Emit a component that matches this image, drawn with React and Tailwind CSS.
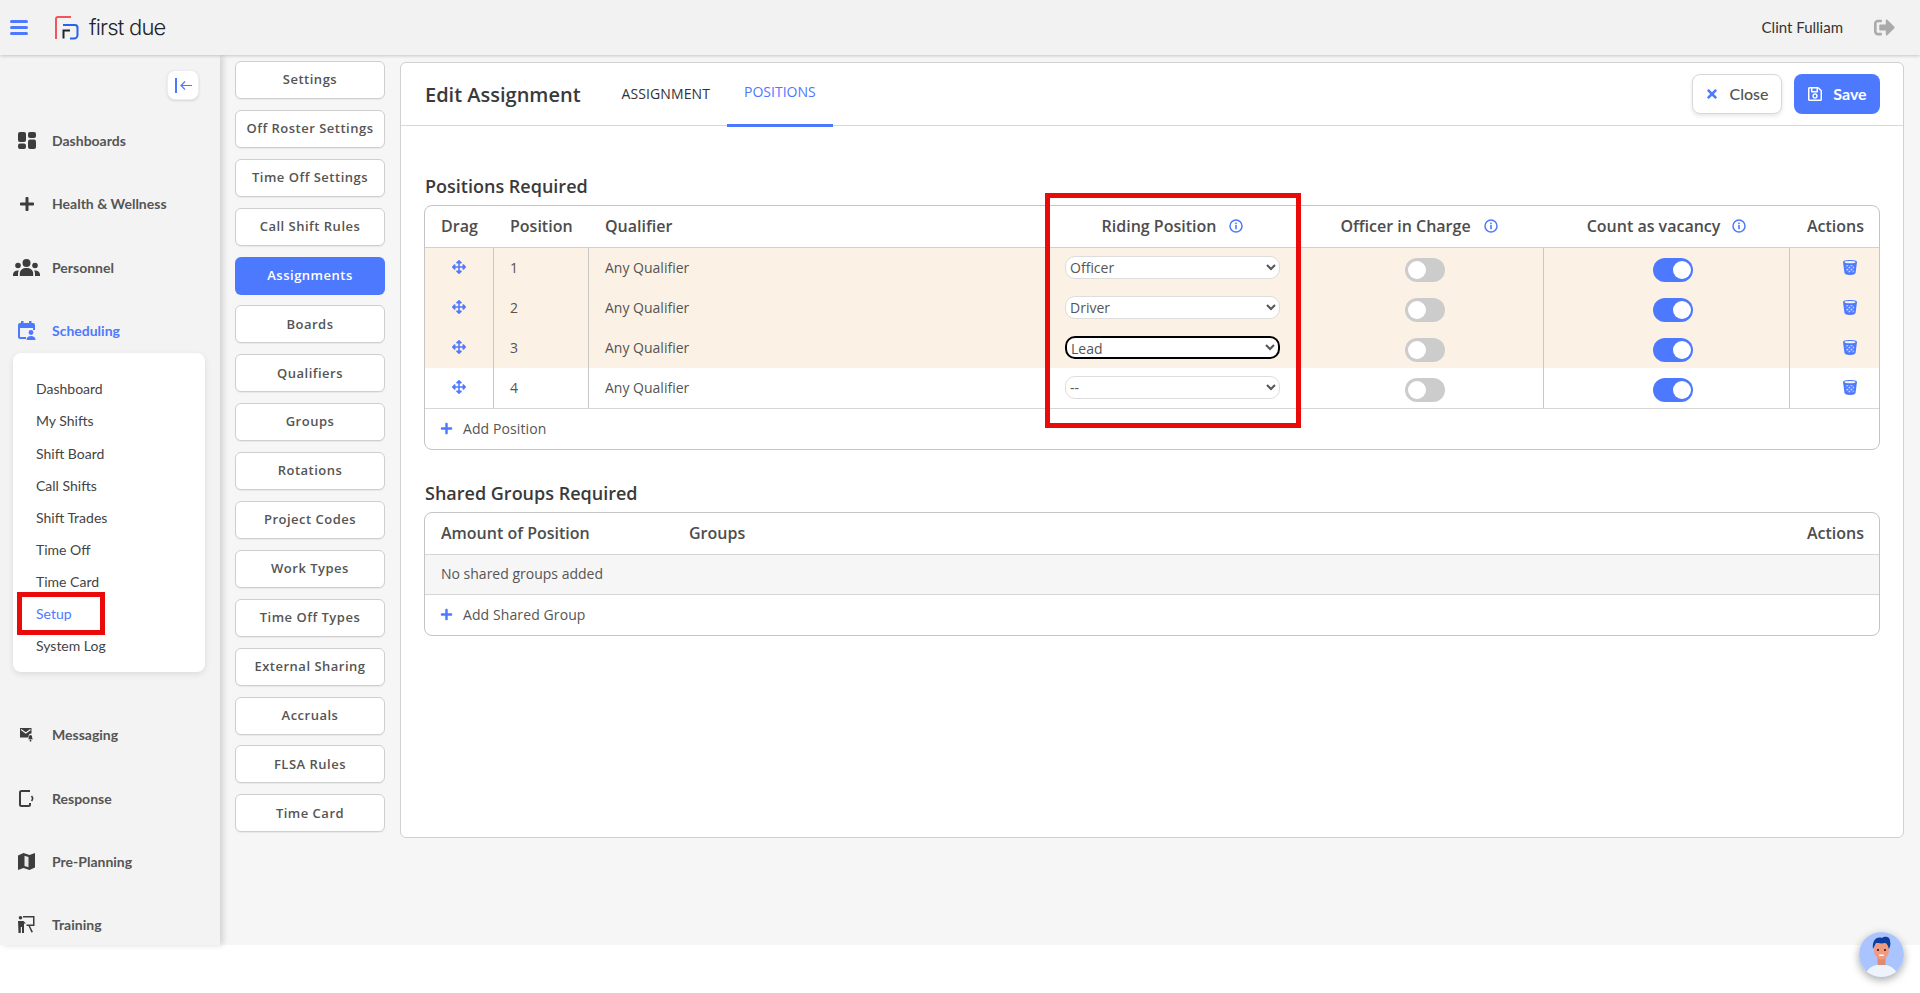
import { FaArrowsAlt, FaPlus, FaRegSave, FaSignOutAlt, FaTimes } from 'react-icons/fa'

const setupTabs = [
  'Settings', 'Off Roster Settings', 'Time Off Settings', 'Call Shift Rules', 'Assignments', 'Boards',
  'Qualifiers', 'Groups', 'Rotations', 'Project Codes', 'Work Types', 'Time Off Types',
  'External Sharing', 'Accruals', 'FLSA Rules', 'Time Card',
]
const subMenu = ['Dashboard', 'My Shifts', 'Shift Board', 'Call Shifts', 'Shift Trades', 'Time Off', 'Time Card', 'Setup', 'System Log']
const rows = [
  { n: 1, value: 'Officer', shaded: true },
  { n: 2, value: 'Driver', shaded: true },
  { n: 3, value: 'Lead', shaded: true, focused: true },
  { n: 4, value: '--', shaded: false },
]

function DashIcon() {
  return (
    <svg width="18" height="17" viewBox="0 0 18 17" fill="#3d3d3d">
      <rect x="0" y="0" width="8" height="10" rx="2" />
      <rect x="10" y="0" width="8" height="6" rx="2" />
      <rect x="0" y="11.500" width="8" height="5.500" rx="2" />
      <rect x="10" y="7.500" width="8" height="9.500" rx="2" />
    </svg>
  )
}

function GroupIcon() {
  return (
    <svg width="27" height="17" viewBox="0 0 27 17" fill="#3d3d3d">
      <circle cx="13.500" cy="4" r="4" />
      <path d="M6.800 17v-2.500c0-3.500 3-5.500 6.700-5.500s6.700 2 6.700 5.500V17z" />
      <circle cx="5" cy="6.500" r="2.800" />
      <circle cx="22" cy="6.500" r="2.800" />
      <path d="M0 17v-1.500c0-2.300 1.800-4 4.800-4 .5 0 .8 0 1.100.1-.6.900-.9 1.900-.9 3V17z" />
      <path d="M27 17v-1.500c0-2.300-1.800-4-4.800-4-.5 0-.8 0-1.100.1.600.9.900 1.900.9 3V17z" />
    </svg>
  )
}

function CalendarIcon() {
  return (
    <svg width="18" height="19" viewBox="0 0 18 19" fill="#4d79ff">
      <rect x="3" y="0" width="2.500" height="3" />
      <rect x="11" y="0" width="2.500" height="3" />
      <path d="M2 2h13a2 2 0 0 1 2 2v5h-2V7H2v9h6v2H2a2 2 0 0 1-2-2V4a2 2 0 0 1 2-2z" />
      <circle cx="13" cy="11.500" r="2.400" />
      <path d="M8.500 19c0-3 2-4 4.500-4s4.500 1 4.500 4z" />
    </svg>
  )
}

function MessageIcon() {
  return (
    <svg width="13" height="14" viewBox="0 0 13 14" fill="#3d3d3d">
      <path d="M0 0H11.500V5.500A3 3 0 0 0 8.500 8.500V9.500H0z" />
      <path d="M1 1.500 5.800 5 10.500 1.500" fill="none" stroke="#f3f3f3" strokeWidth="1.100" />
      <path d="M10.500 7a1.600 1.600 0 0 1 1.600 1.600V10l.9 1.200H8l.9-1.200V8.600A1.600 1.600 0 0 1 10.500 7zM9.700 11.800h1.600V13.500H9.700z" />
    </svg>
  )
}

function ResponseIcon() {
  return (
    <svg width="15" height="17" viewBox="0 0 15 17" fill="none" stroke="#3d3d3d">
      <path d="M11 1H2.500A1.500 1.500 0 0 0 1 2.500v12A1.500 1.500 0 0 0 2.500 16H9.500A1.500 1.500 0 0 0 11 14.500V13" strokeWidth="2" />
      <path d="M12.500 6a3.800 3.800 0 0 1 0 5" strokeWidth="1.600" />
    </svg>
  )
}

function MapIcon() {
  return (
    <svg width="17" height="17" viewBox="0 0 17 17">
      <path d="M0 2.500 5.500 0l6 2L17 0v14.500L11.500 17l-6-2L0 17z" fill="#3d3d3d" />
      <path d="M6.500 2.800 10.500 4v10.300l-4-1.300z" fill="#e8e8e8" />
    </svg>
  )
}

function TrainingIcon() {
  return (
    <svg width="17" height="17" viewBox="0 0 17 17" fill="#3d3d3d">
      <circle cx="2.500" cy="1.800" r="1.800" />
      <path d="M0 5h5.500L8 7.500H6V17H4v-6H2.800v6H0.500z" />
      <path d="M5 0h11.500v10H12l3 6-1.600.6L10.500 10H8.500V8.500h6.500v-7H5z" />
    </svg>
  )
}

function InfoIcon() {
  return (
    <svg width="14" height="14" viewBox="0 0 14 14" fill="none" className="shrink-0">
      <circle cx="7" cy="7" r="6" stroke="#4d79ff" strokeWidth="1.500" />
      <rect x="6.200" y="6" width="1.600" height="4.200" fill="#4d79ff" />
      <rect x="6.200" y="3.600" width="1.600" height="1.600" fill="#4d79ff" />
    </svg>
  )
}

function TrashIcon() {
  return (
    <svg width="14" height="15" viewBox="0 0 14 15">
      <defs>
        <pattern id="mesh" width="3" height="3" patternUnits="userSpaceOnUse" patternTransform="rotate(45)">
          <rect width="3" height="3" fill="#4d79ff" />
          <rect width="1.600" height="1.600" fill="#dfe7ff" />
        </pattern>
      </defs>
      <path d="M0 2C0 .8 3 0 7 0s7 .8 7 2l-1.500 11c-.2 1.200-2.500 2-5.500 2s-5.300-.8-5.500-2z" fill="#4d79ff" />
      <ellipse cx="7" cy="2.200" rx="5.400" ry="1.100" fill="#f2f4ff" />
      <path d="M2.500 5h9l-.8 7.500H3.300z" fill="url(#mesh)" />
    </svg>
  )
}

function Logo() {
  return (
    <svg width="24" height="24" viewBox="0 0 24 24" fill="none">
      <path d="M1 23V3a2 2 0 0 1 2-2h13" stroke="#f2545b" strokeWidth="2" />
      <path d="M8 9h12a2.500 2.500 0 0 1 2.500 2.500V19a3.500 3.500 0 0 1-3.500 3.500h-4" stroke="#2563eb" strokeWidth="2" />
      <path d="M8.500 22.500V14.500H15" stroke="#20242c" strokeWidth="2" />
    </svg>
  )
}

function Avatar() {
  return (
    <svg width="45" height="45" viewBox="0 0 45 45">
      <clipPath id="avatar-clip"><circle cx="22.500" cy="22.500" r="22.500" /></clipPath>
      <g clipPath="url(#avatar-clip)">
        <rect width="45" height="45" fill="#a9c4ff" />
        <path d="M6 45c1-9 8-12 16.500-13 8 1 15 4 16.500 13z" fill="#eef3fb" />
        <rect x="18.500" y="24" width="8" height="9" fill="#e08a70" />
        <ellipse cx="22.500" cy="18" rx="7.500" ry="9.500" fill="#f09a80" />
        <path d="M14 17c-1-8 3-13 9-11 2-2 8-2 8 3 1 3 0 6-1 8-1-3-2-6-4-6-4 1-7 0-9 0-1 2-2 4-3 6z" fill="#0f3d9e" />
        <rect x="18" y="17" width="2" height="2" fill="#5a2f22" />
        <rect x="25" y="17" width="2" height="2" fill="#5a2f22" />
        <rect x="20" y="22.500" width="5" height="1.500" rx="0.700" fill="#fff" />
      </g>
    </svg>
  )
}

function Toggle({ on }) {
  return (
    <div className={`ml-[12px] mt-[5px] h-[24px] w-[40px] rounded-full flex items-center ${on ? 'bg-[#4d79ff] justify-end pr-[1.500px]' : 'bg-[#cccccc] justify-start pl-[3px]'}`}>
      <div className="h-[18px] w-[18px] rounded-full bg-white" />
    </div>
  )
}

function NavItem({ icon, label, active, className = '' }) {
  return (
    <div className={`flex items-center h-[63.300px] pl-[12px] ${className}`}>
      <div className="w-[29px] flex justify-center shrink-0">{icon}</div>
      <span className={`ml-[11px] text-[14px] font-bold ${active ? 'text-[#4d79ff]' : 'text-[#555555]'}`}>{label}</span>
    </div>
  )
}

function AddRow({ label }) {
  return (
    <div className="h-[40px] flex items-center pl-[15px] pb-[2px] text-[14px] font-medium tracking-[0.1px] text-[#555555]">
      <FaPlus size={13} color="#4d79ff" />
      <span className="ml-[10px]">{label}</span>
    </div>
  )
}

export default function App() {
  return (
    <div className="relative h-[993px] w-[1920px] overflow-hidden bg-white font-['Open_Sans',sans-serif]">
      <header className="relative z-20 h-[55px] flex items-center bg-[#f2f2f2] shadow-[0_1px_3px_rgba(0,0,0,0.2)]">
        <div className="ml-[10px] flex flex-col gap-[3px] w-[18px]">
          <div className="h-[3px] bg-[#4d79ff] rounded-sm" />
          <div className="h-[3px] bg-[#4d79ff] rounded-sm" />
          <div className="h-[3px] bg-[#4d79ff] rounded-sm" />
        </div>
        <div className="ml-[27px]"><Logo /></div>
        <span className="ml-[10px] font-['Inter',sans-serif] font-light text-[22px] tracking-[-0.800px] text-[#20242c]">first due</span>
        <span className="ml-auto font-['Lato',sans-serif] text-[15px] text-[#333333]">Clint Fulliam</span>
        <FaSignOutAlt size={21} color="#aaaaaa" className="ml-[31px] mr-[25px]" />
      </header>

      <div className="h-[890px] flex bg-[#f6f6f6]">
        <aside className="relative z-10 w-[220px] shrink-0 bg-[#f3f3f3] shadow-[3px_0_6px_rgba(0,0,0,0.15)] font-['Lato',sans-serif]">
          <div className="h-[54px] flex justify-end pt-[15px] pr-[21px]">
            <div className="h-[30px] w-[32px] rounded-lg bg-white border border-[#eeeeee] flex items-center justify-center shadow-sm">
              <svg width="17" height="15" viewBox="0 0 17 15" fill="none">
                <rect x="0" y="0" width="2" height="15" fill="#4d79ff" />
                <path d="M17 7.500H6M10 3.500l-4 4 4 4" stroke="#4d79ff" strokeWidth="1.200" />
              </svg>
            </div>
          </div>
          <NavItem icon={<DashIcon />} label="Dashboards" />
          <NavItem icon={<FaPlus size={16} color="#3d3d3d" />} label="Health & Wellness" />
          <NavItem icon={<GroupIcon />} label="Personnel" />
          <NavItem icon={<CalendarIcon />} label="Scheduling" active className="mb-[-9.500px]" />
          <div className="mx-[13px] w-[192px] h-[319px] rounded-lg bg-white pt-[20px] shadow-[0_2px_6px_rgba(0,0,0,0.1)]">
            {subMenu.map(item => (
              <div key={item} className={`h-[32.150px] flex items-center pl-[23px] text-[14px] ${item === 'Setup' ? 'text-[#4d79ff]' : 'text-[#444444]'}`}>
                {item}
              </div>
            ))}
          </div>
          <div className="mt-[31.500px]">
            <NavItem icon={<MessageIcon />} label="Messaging" />
            <NavItem icon={<ResponseIcon />} label="Response" />
            <NavItem icon={<MapIcon />} label="Pre-Planning" />
            <NavItem icon={<TrainingIcon />} label="Training" />
          </div>
        </aside>

        <nav className="ml-[15px] w-[150px] shrink-0 pt-[6px] flex flex-col gap-[10.900px]">
          {setupTabs.map(tab => (
            <div
              key={tab}
              className={`h-[38px] rounded-md flex items-center justify-center text-[13px] font-semibold tracking-[0.500px] ${
                tab === 'Assignments'
                  ? 'bg-[#4d79ff] text-white font-bold'
                  : 'bg-white text-[#555555] border border-[#cfcfcf] shadow-[0_1px_1px_rgba(0,0,0,0.06)]'
              }`}
            >
              {tab}
            </div>
          ))}
        </nav>

        <main className="ml-[15px] mt-[6.500px] w-[1504px] h-[776px] rounded-md bg-white border border-[#d0d0d0]">
          <div className="h-[63.500px] flex border-b border-[#d8d8d8] pl-[24px] pr-[23px]">
            <h1 className="self-center text-[20px] font-semibold text-[#3a3a3a] mt-[2px]">Edit Assignment</h1>
            <div className="ml-[24px] h-[63px] px-[17px] flex items-center pb-[2px] text-[14px] font-medium tracking-[0.100px] text-[#333333]">ASSIGNMENT</div>
            <div className="h-[64px] px-[17px] flex items-center pb-[3px] text-[14px] font-medium text-[#4d79ff] border-b-[3px] border-[#4d79ff]">POSITIONS</div>
            <div className="ml-auto self-center flex gap-[12px] mt-[1px]">
              <div className="h-[40px] w-[90px] rounded-lg bg-white border border-[#d8d8d8] shadow-[0_2px_4px_rgba(0,0,0,0.1)] flex items-center justify-center gap-[10px] font-['Lato',sans-serif] text-[16px] font-medium text-[#555555]">
                <FaTimes size={14} color="#4d79ff" />
                Close
              </div>
              <div className="h-[40px] w-[86px] rounded-lg bg-[#4d79ff] flex items-center justify-center gap-[10px] font-['Lato',sans-serif] text-[16px] font-bold text-white">
                <FaRegSave size={16} />
                Save
              </div>
            </div>
          </div>

          <div className="pl-[23px] pr-[23px] pt-[48px]">
            <h2 className="h-[24px] mb-[7px] ml-[1px] text-[18px] font-semibold leading-[24px] text-[#3a3a3a]">Positions Required</h2>
            <div className="rounded-lg border border-[#c4c4c4] overflow-hidden">
              <div className="h-[42px] flex items-center pb-[2px] border-b border-[#d6d0c8] text-[16px] font-semibold text-[#4d4d4d]">
                <div className="w-[69px] text-center">Drag</div>
                <div className="w-[95px] pl-[16px]">Position</div>
                <div className="w-[461px] pl-[16px]">Qualifier</div>
                <div className="w-[245px] flex items-center justify-center gap-[13px]">Riding Position<InfoIcon /></div>
                <div className="w-[248px] flex items-center justify-center gap-[13px]">Officer in Charge<InfoIcon /></div>
                <div className="w-[247px] flex items-center justify-center gap-[12px]">Count as vacancy<InfoIcon /></div>
                <div className="flex-1 text-right pr-[15px]">Actions</div>
              </div>
              {rows.map(row => (
                <div key={row.n} className={`h-[40px] flex items-center text-[14px] text-[#555555] ${row.shaded ? 'bg-[#fbf1e4]' : 'bg-white'}`}>
                  <div className="w-[69px] h-full flex items-center justify-center pb-[2px] border-r border-[#c8c8c8]">
                    <FaArrowsAlt size={14} color="#4d79ff" />
                  </div>
                  <div className="w-[95px] h-full flex items-center pl-[16px] pb-[2px] border-r border-[#c8c8c8]">{row.n}</div>
                  <div className="w-[461px] pl-[16px] mb-[2px]">Any Qualifier</div>
                  <div className="w-[245px] flex justify-center mb-[2px]">
                    <select
                      defaultValue={row.value}
                      className={`h-[23px] w-[215px] rounded-[10px] bg-white text-[14px] leading-none text-[#555555] pl-0 appearance-auto ${row.focused ? 'border-2 border-black' : 'border border-[#dddddd]'}`}
                    >
                      <option>{row.value}</option>
                    </select>
                  </div>
                  <div className="w-[248px] flex justify-center mb-[2px]"><Toggle on={false} /></div>
                  <div className="w-[247px] h-full flex items-center justify-center pb-[2px] border-x border-[#c8c8c8]"><Toggle on /></div>
                  <div className="flex-1 flex justify-end pr-[22px] mb-[2px]"><TrashIcon /></div>
                </div>
              ))}
              <div className="border-t border-[#d6d6d6]"><AddRow label="Add Position" /></div>
            </div>

            <h2 className="h-[24px] mt-[31px] mb-[7px] ml-[1px] text-[18px] font-semibold leading-[24px] text-[#3a3a3a]">Shared Groups Required</h2>
            <div className="rounded-lg border border-[#c4c4c4] overflow-hidden">
              <div className="h-[42px] flex items-center pb-[2px] pl-[16px] pr-[15px] border-b border-[#d6d6d6] text-[16px] font-semibold text-[#4d4d4d]">
                <div className="w-[248px]">Amount of Position</div>
                <div>Groups</div>
                <div className="ml-auto">Actions</div>
              </div>
              <div className="h-[40px] flex items-center pl-[16px] pb-[2px] bg-[#f6f6f6] text-[14px] text-[#555555] border-b border-[#d6d6d6]">No shared groups added</div>
              <AddRow label="Add Shared Group" />
            </div>
          </div>
        </main>
      </div>

      {/* red callouts and chat bubble sit on top of the page */}
      <div className="absolute z-30 left-[17px] top-[592px] h-[43px] w-[88px] border-[5px] border-[#ea0a0a]" />
      <div className="absolute z-30 left-[1045px] top-[193px] h-[235px] w-[256px] border-[5px] border-[#ea0a0a]" />
      <div className="absolute z-30 left-[1859px] top-[932px] rounded-full shadow-[0_3px_8px_rgba(0,0,0,0.35)]"><Avatar /></div>
    </div>
  )
}
